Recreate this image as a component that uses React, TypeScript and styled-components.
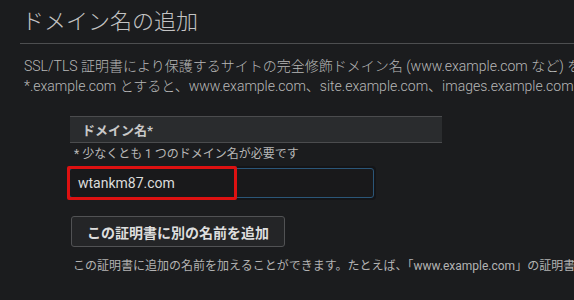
import React from 'react'
import styled, { createGlobalStyle } from 'styled-components'

const GlobalStyle = createGlobalStyle`
  html, body {
    margin: 0;
    padding: 0;
    background: #1b1c1e;
    overflow: hidden;
  }
  body {
    font-family: Roboto, "Noto Sans CJK JP", sans-serif;
  }
`

const Page = styled.div`
  width: 574px;
  height: 300px;
  overflow: hidden;
  padding-top: 6px;
  box-sizing: border-box;
`

const Title = styled.h1`
  margin: 0 0 0 22px;
  font-size: 22px;
  line-height: 32px;
  font-weight: 300;
  color: #c4c4c4;
  white-space: nowrap;
`

const Rule = styled.hr`
  margin: 5px 0 0 20px;
  border: none;
  border-top: 1px solid #4d4e50;
`

const Intro = styled.p`
  margin: 12px 0 0 24px;
  font-size: 14px;
  line-height: 20px;
  font-weight: 300;
  color: #b8b8b8;
  white-space: nowrap;
`

const Section = styled.div`
  margin: 20px 0 0 70px;
  width: 372px;
`

const FieldHeader = styled.div`
  height: 25px;
  padding-left: 12px;
  display: flex;
  align-items: center;
  background: #2a2c2e;
  border-top: 1px solid #4b4c4e;
  border-bottom: 1px solid #4b4c4e;
  font-size: 13px;
  font-weight: 700;
  color: #c8c8c8;
`

const Hint = styled.div`
  margin: 3px 0 0 4px;
  font-size: 12px;
  line-height: 16px;
  color: #b8b8b8;
  white-space: nowrap;
`

const InputFrame = styled.div`
  position: relative;
  margin: 4px 0 0 -3px;
  width: 305px;
  padding: 2px;
  background: #141518;
  border-radius: 4px;
`

const TextInput = styled.div`
  height: 28px;
  padding-left: 8px;
  display: flex;
  align-items: center;
  border: 1px solid #2b5678;
  border-radius: 3px;
  background: #19191b;
  font-size: 14px;
  color: #dcdcdc;
`

const Highlight = styled.div`
  position: absolute;
  left: 0;
  top: 0;
  width: 170px;
  height: 34px;
  box-sizing: border-box;
  border: 3px solid #dd1111;
  border-radius: 2px;
  pointer-events: none;
`

const AddButton = styled.button`
  margin: 16px 0 0 1px;
  height: 31px;
  padding: 0 15px;
  background: #242527;
  border: 1px solid #515254;
  border-radius: 3px;
  font-family: Roboto, "Noto Sans CJK JP", sans-serif;
  font-size: 14px;
  font-weight: 700;
  color: #dedede;
`

const Note = styled.div`
  margin: 11px 0 0 3px;
  font-size: 12px;
  line-height: 16px;
  color: #b3b3b3;
  white-space: nowrap;
`

export default function App() {
  return (
    <>
      <GlobalStyle />
      <Page>
        <Title>ドメイン名の追加</Title>
        <Rule />
        <Intro>
          SSL/TLS 証明書により保護するサイトの完全修飾ドメイン名 (www.example.com など) を入力します。ワイルドカード証明書を使う場合は
          <br />
          *.example.com とすると、www.example.com、site.example.com、images.example.com などが保護されます。
        </Intro>
        <Section>
          <FieldHeader>ドメイン名*</FieldHeader>
          <Hint>* 少なくとも 1 つのドメイン名が必要です</Hint>
          <InputFrame>
            <TextInput>wtankm87.com</TextInput>
            <Highlight />
          </InputFrame>
          <AddButton>この証明書に別の名前を追加</AddButton>
          <Note>
            この証明書に追加の名前を加えることができます。たとえば、「www.example.com」の証明書に「example.com」を追加できます。
          </Note>
        </Section>
      </Page>
    </>
  )
}
